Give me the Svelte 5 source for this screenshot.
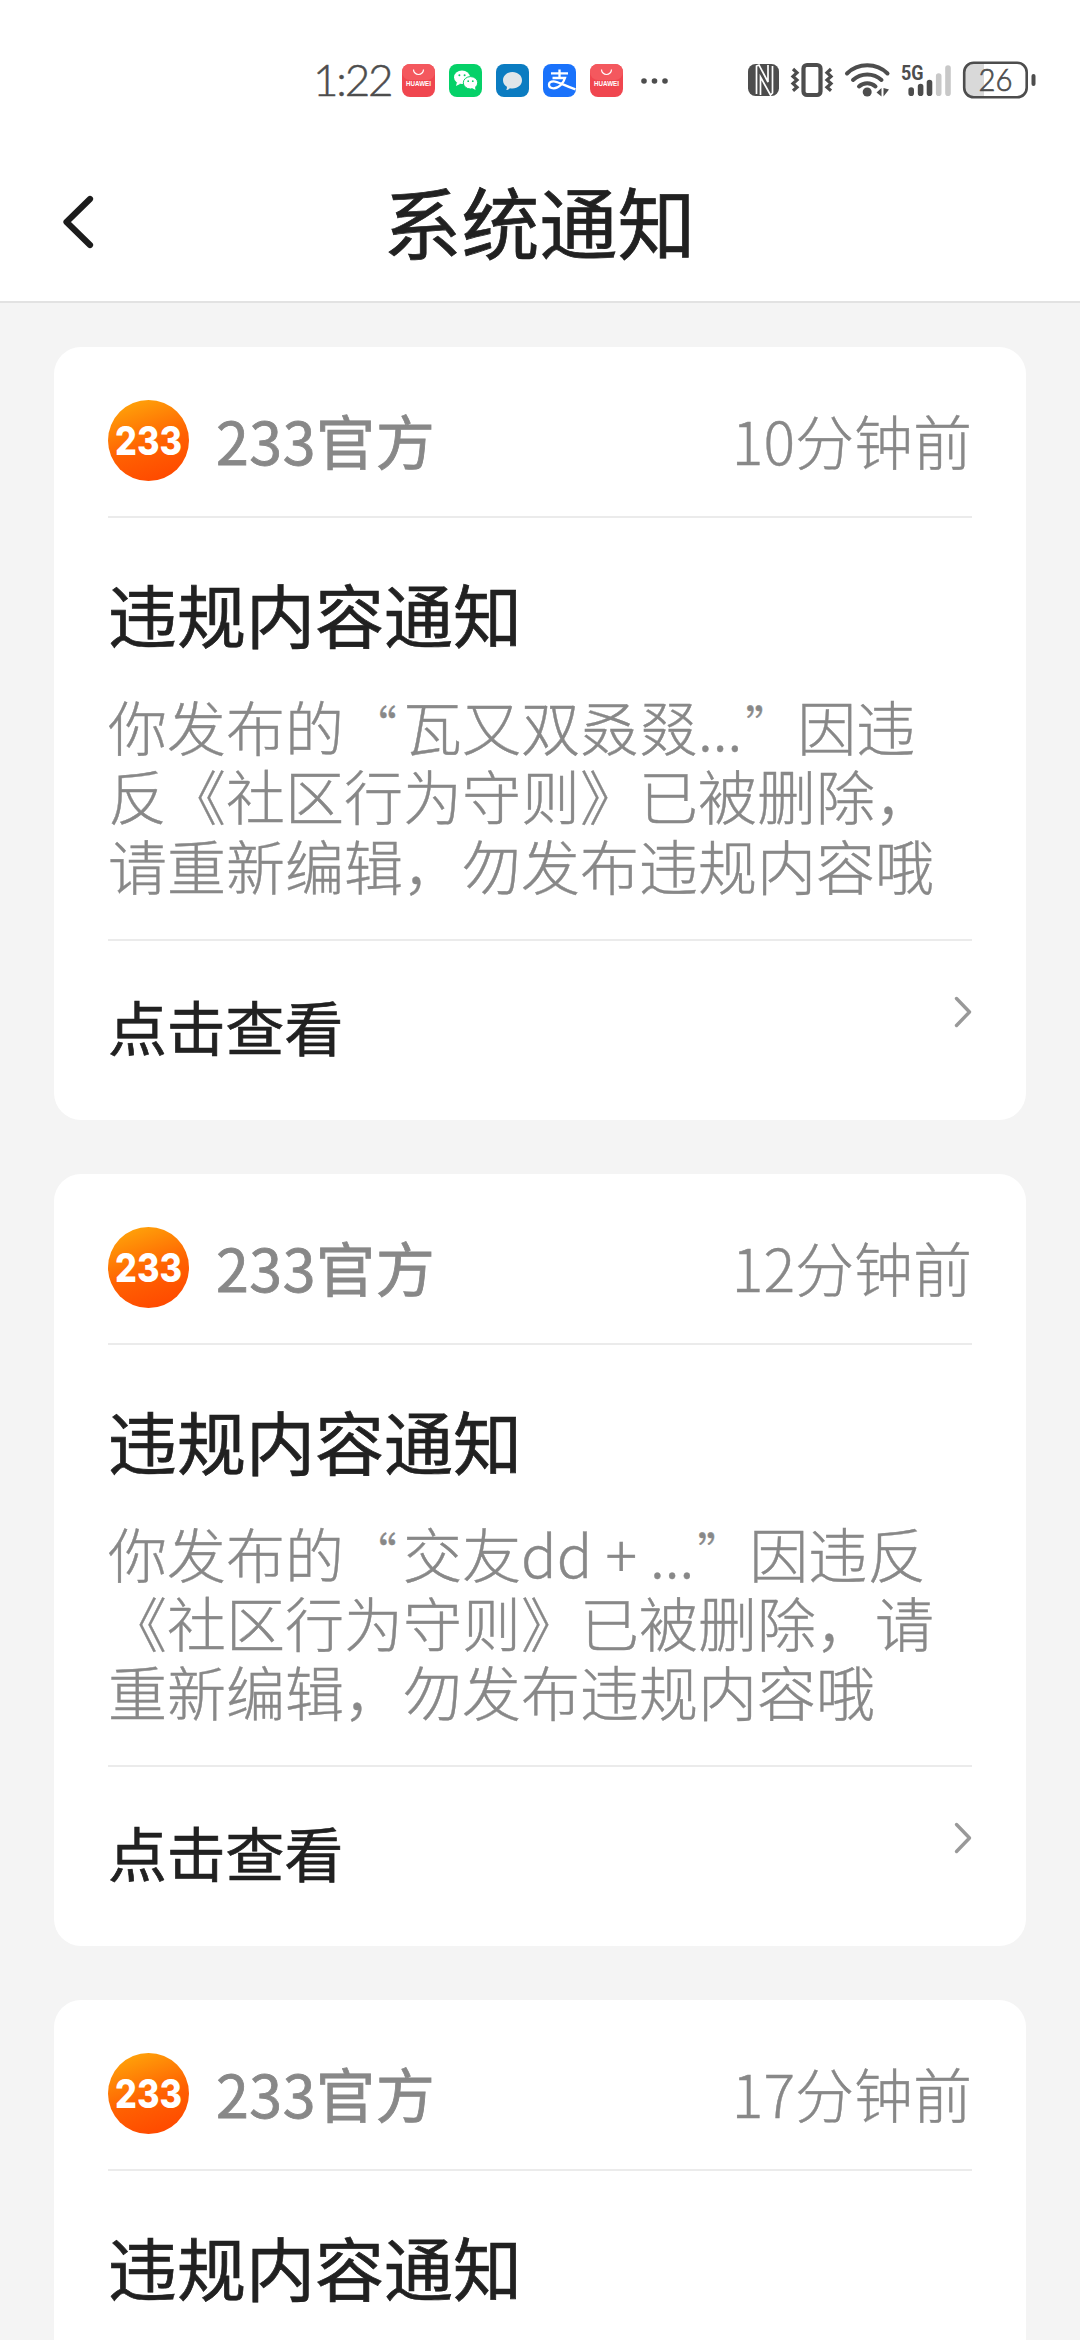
<script lang="ts">
    const apps: string[] = ['huawei', 'wechat', 'message', 'alipay', 'huawei'];

    const notices = [
        {
            time: '10分钟前',
            lines: ['你发布的“瓦又双叒叕...”因违', '反《社区行为守则》已被删除，', '请重新编辑，勿发布违规内容哦'],
        },
        {
            time: '12分钟前',
            lines: ['你发布的“交友dd + ...”因违反', '《社区行为守则》已被删除，请', '重新编辑，勿发布违规内容哦'],
        },
        {
            time: '17分钟前',
            lines: [],
        },
    ];

    // quotes are set smaller than the text around them
    function parts(line: string) {
        return line.split(/([“”])/).filter((p) => p !== '');
    }
</script>

<div class="screen">
    <div class="status">
        <span class="clock">1:22</span>
        <div class="apps">
            {#each apps as app}
                <svg width="33" height="33" viewBox="0 0 33 33">
                    {#if app === 'huawei'}
                        <rect width="33" height="33" rx="8" fill="#f0464f" />
                        <rect width="33" height="16" rx="8" fill="#f4585e" />
                        <path d="M11.5 5.5a5 5 0 0 0 10 0" fill="none" stroke="#fff" stroke-width="1.2" />
                        <text x="4" y="21.5" class="brand" textLength="25" lengthAdjust="spacingAndGlyphs">HUAWEI</text>
                    {:else if app === 'wechat'}
                        <rect width="33" height="33" rx="8" fill="#05d168" />
                        <ellipse cx="13" cy="13.3" rx="8" ry="6.8" fill="#fff" />
                        <path d="M8 18l-1 4 4.5-2.2z" fill="#fff" />
                        <ellipse cx="21.5" cy="18.8" rx="7.2" ry="6.2" fill="#fff" stroke="#05d168" stroke-width="1" />
                        <path d="M23 24l3.5 2-.6-3.6z" fill="#fff" />
                        <circle cx="10.4" cy="11.3" r="1" fill="#05d168" />
                        <circle cx="15.6" cy="11.3" r="1" fill="#05d168" />
                        <circle cx="19.2" cy="17.2" r=".9" fill="#05d168" />
                        <circle cx="23.8" cy="17.2" r=".9" fill="#05d168" />
                    {:else if app === 'message'}
                        <rect width="33" height="33" rx="8" fill="#0b7cc1" />
                        <path d="M16.5 8c5.4 0 9.5 3.6 9.5 8.3s-4.1 8.2-9.5 8.2c-1 0-1.8-.1-2.6-.3-.9 1-2.2 1.7-3.7 1.9.6-1 .8-2 .7-3.3C8.4 21.3 7 19 7 16.3 7 11.6 11.1 8 16.5 8z" fill="#e0e6ea" />
                    {:else}
                        <rect width="33" height="33" rx="8" fill="#1a72fb" />
                        <path d="M8 9.3h17M16.5 5.5v8.5M9.5 14h12.500c-1.500 5-6 10.300-11.300 10.300-3 0-4.700-1.600-4.700-3.500 0-2.200 2-3.500 4.600-3.500 4.200 0 9 3.600 21.900 8" fill="none" stroke="#fff" stroke-width="2.3" />
                    {/if}
                </svg>
            {/each}
        </div>
        <svg class="more" width="28" height="6" viewBox="0 0 28 6" fill="#4d4d4d">
            <circle cx="3" cy="3" r="2.8" /><circle cx="13.5" cy="3" r="2.8" /><circle cx="24" cy="3" r="2.8" />
        </svg>

        <svg class="system" width="290" height="40" viewBox="0 0 290 40">
            <!-- nfc -->
            <rect x="0" y="3" width="31" height="32" rx="7.5" fill="#4d4d4d" />
            <path d="M8.5 33V5l2.500-1 9 17V4" fill="none" stroke="#fff" stroke-width="1.7" />
            <path d="M12.500 34V16l10 18 2-2V5" fill="none" stroke="#fff" stroke-width="1.7" />
            <!-- vibrate -->
            <rect x="55.5" y="4" width="17" height="30" rx="3.5" fill="none" stroke="#4d4d4d" stroke-width="4.2" />
            <path d="M45 8l4 3.800-4 3.600 4 3.600-4 3.600 4 3.600-4 3.500M83 8l-4 3.800 4 3.600-4 3.600 4 3.600-4 3.600 4 3.500" fill="none" stroke="#4d4d4d" stroke-width="3.2" />
            <!-- wifi -->
            <g fill="none" stroke="#4d4d4d" stroke-width="4" stroke-linecap="round">
                <path d="M99 12.5c11-11 29.500-11 40.500 0" />
                <path d="M105 19c8-7.500 20.500-7.500 28.500 0" />
                <path d="M111 25.500c4.700-4.300 11.800-4.300 16.500 0" />
            </g>
            <circle cx="119.2" cy="31" r="4.5" fill="#4d4d4d" />
            <path d="M128.500 31.500l5-4.500v8.500zM135.500 27v8.500l5.500-7z" fill="#4d4d4d" />
            <!-- signal -->
            <text x="153" y="18.5" class="net" textLength="22.5" lengthAdjust="spacingAndGlyphs">5G</text>
            <g stroke-width="5.6" stroke-linecap="round" stroke="#4d4d4d">
                <path d="M163.200 29v3.300M172.600 25.500v6.800M181.500 21.500v10.800" />
                <path d="M190.700 15v17.300M200 7v25.300" stroke="#c8c8c8" />
            </g>
            <!-- battery -->
            <path d="M223 2h13v34h-13a8 8 0 0 1-7-8V10a8 8 0 0 1 7-8z" fill="#d9d9d9" />
            <rect x="216.2" y="1.7" width="62.5" height="34.6" rx="9.5" fill="none" stroke="#4d4d4d" stroke-width="2.6" />
            <path d="M285.5 15v8" stroke="#4d4d4d" stroke-width="4" stroke-linecap="round" />
            <text x="230.5" y="30" class="level" textLength="34" lengthAdjust="spacingAndGlyphs">26</text>
        </svg>
    </div>

    <header>
        <svg width="36" height="58" viewBox="0 0 36 58">
            <path d="M31 6L7.5 29 31 52" fill="none" stroke="#1c1c1c" stroke-width="6.2" stroke-linecap="round" stroke-linejoin="round" />
        </svg>
        <h1>系统通知</h1>
    </header>

    <main>
        {#each notices as notice, i}
            <article>
                <div class="top">
                    <svg width="81" height="81" viewBox="0 0 81 81">
                        <defs>
                            <linearGradient id="orange{i}" x1="0.2" y1="0" x2="0.55" y2="1">
                                <stop offset="0" stop-color="#ffa60a" />
                                <stop offset="0.6" stop-color="#ff6102" />
                                <stop offset="1" stop-color="#ff4b00" />
                            </linearGradient>
                        </defs>
                        <circle cx="40.5" cy="40.5" r="40.5" fill="url(#orange{i})" />
                        <text x="7" y="54.5" class="logo" textLength="67" lengthAdjust="spacingAndGlyphs">233</text>
                    </svg>
                    <span class="name">233官方</span>
                    <time>{notice.time}</time>
                </div>
                <h2>违规内容通知</h2>
                {#if notice.lines.length}
                    <p>
                        {#each notice.lines as line}
                            <span class="line">{#each parts(line) as part}<span class:open={part === '“'} class:close={part === '”'}>{part}</span>{/each}</span>
                        {/each}
                    </p>
                    <div class="link">
                        <span>点击查看</span>
                        <svg width="18" height="32" viewBox="0 0 18 32">
                            <path d="M2.5 2.5L15.5 16 2.5 29.5" fill="none" stroke="#999" stroke-width="3.4" stroke-linecap="round" stroke-linejoin="round" />
                        </svg>
                    </div>
                {/if}
            </article>
        {/each}
    </main>
</div>

<style>
    :global(body) {
        margin: 0;
    }

    .screen {
        width: 1080px;
        height: 2340px;
        overflow: hidden;
        display: flex;
        flex-direction: column;
        background: #f4f4f4;
        font-family: "Noto Sans CJK SC", "Noto Sans", sans-serif;
        color: #212121;
    }

    .status {
        box-sizing: border-box;
        height: 144px;
        flex: none;
        display: flex;
        align-items: center;
        padding: 17px 0 0 313px;
        background: #fff;
    }

    .clock {
        width: 89px;
        flex: none;
        margin-top: -3px;
        font-family: Lato, "Noto Sans", sans-serif;
        font-weight: 300;
        font-size: 44px;
        line-height: 50px;
        letter-spacing: -2.2px;
        -webkit-text-stroke: 0.5px #4d4d4d;
        color: #4d4d4d;
    }

    .apps {
        display: flex;
        gap: 14px;
        margin-right: 18px;
    }

    .system {
        margin-left: 79px;
        overflow: visible;
    }

    .brand {
        font: 700 6.5px "Liberation Sans", sans-serif;
        fill: #fff;
    }

    .net {
        font: 700 21px Roboto, sans-serif;
        fill: #4d4d4d;
    }

    .level {
        font: 300 32px Lato, sans-serif;
        fill: #4d4d4d;
        stroke: #4d4d4d;
        stroke-width: 0.7px;
    }

    header {
        box-sizing: border-box;
        height: 159px;
        flex: none;
        display: flex;
        align-items: center;
        padding: 0 59px 2px;
        background: #fff;
        border-bottom: 2px solid #e2e2e2;
    }

    h1 {
        flex: 1;
        margin: -3px 37px 0 0;
        text-align: center;
        font-size: 78px;
        line-height: 100px;
        font-weight: 400;
        -webkit-text-stroke: 0.7px #212121;
    }

    main {
        display: flex;
        flex-direction: column;
        gap: 54px;
        padding: 44px 54px 0;
    }

    article {
        box-sizing: border-box;
        height: 772.5px;
        flex: none;
        padding: 0 54px;
        border-radius: 27px;
        background: #fff;
    }

    .top {
        box-sizing: border-box;
        height: 171px;
        display: flex;
        align-items: center;
        padding-top: 18px;
        border-bottom: 2px solid #ebebeb;
        font-size: 59px;
        line-height: 80px;
        color: #888;
    }

    .name {
        margin: -1px 0 0 27px;
        font-weight: 400;
        letter-spacing: 0.6px;
        -webkit-text-stroke: 0.8px #888;
    }

    time {
        margin: -1px 0 0 auto;
        font-weight: 300;
        -webkit-text-stroke: 0.4px #888;
    }

    .logo {
        font: 800 39px Inter, sans-serif;
        fill: #fff;
    }

    h2 {
        margin: 45px 0 0;
        font-size: 69px;
        line-height: 100px;
        font-weight: 400;
        -webkit-text-stroke: 0.7px #212121;
    }

    p {
        margin: 28px 0 0;
        padding-bottom: 40px;
        border-bottom: 2px solid #ebebeb;
        font-size: 59px;
        line-height: 69.3px;
        font-weight: 300;
        color: #888;
        -webkit-text-stroke: 0.4px #888;
    }

    .line {
        display: block;
        height: 69.3px;
        white-space: pre;
    }

    .open,
    .close {
        box-sizing: border-box;
        display: inline-block;
        width: 59px;
        font-size: 46px;
        line-height: 0;
        vertical-align: 7px;
    }

    .open {
        padding-right: 6px;
        text-align: right;
    }

    .close {
        width: 55px;
        padding-left: 3px;
    }

    .link {
        display: flex;
        justify-content: space-between;
        padding-top: 43px;
        font-size: 58.8px;
        line-height: 84px;
        font-weight: 400;
        -webkit-text-stroke: 0.7px #212121;
    }

    .link svg {
        margin-top: 12px;
    }
</style>
